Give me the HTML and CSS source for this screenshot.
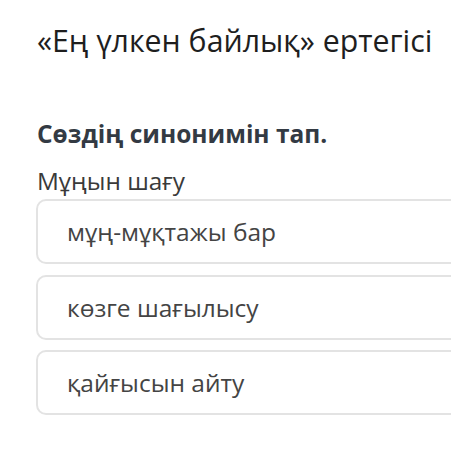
FILE: index.html
```html
<!DOCTYPE html>
<html lang="kk">
<head>
<meta charset="utf-8">
<link rel="stylesheet" href="styles.css">
</head>
<body>
<div class="page">
  <h1 class="title">«Ең үлкен байлық» ертегісі</h1>
  <h2 class="question">Сөздің синонимін тап.</h2>
  <p class="prompt">Мұңын шағу</p>
  <div class="options">
    <div class="option">мұң-мұқтажы бар</div>
    <div class="option">көзге шағылысу</div>
    <div class="option">қайғысын айту</div>
  </div>
</div>
</body>
</html>
```
FILE: styles.css
```css
html, body {
  margin: 0;
  padding: 0;
  background: #ffffff;
  overflow: hidden;
}
body {
  font-family: "Open Sans", "Noto Sans", sans-serif;
}
.page {
  padding: 21px 0 0 37px;
}
.title {
  margin: 0;
  font-size: 30.3px;
  font-weight: 400;
  line-height: 40px;
  color: #1e1e1e;
}
.question {
  margin: 58px 0 0 0;
  font-size: 24.5px;
  font-weight: 700;
  line-height: 30px;
  color: #333a43;
}
.prompt {
  margin: 17px 0 0 0;
  font-size: 24.3px;
  line-height: 30px;
  color: #3a3a3a;
}
.options {
  display: flex;
  flex-direction: column;
  gap: 10.5px;
  margin-top: 3px;
  margin-left: -1px;
  margin-right: -40px;
}
.option {
  height: 61px;
  box-sizing: content-box;
  border: 2px solid #e3e3e3;
  border-radius: 10px;
  display: flex;
  align-items: center;
  padding-left: 29px;
  font-size: 24.5px;
  color: #444444;
}
```
